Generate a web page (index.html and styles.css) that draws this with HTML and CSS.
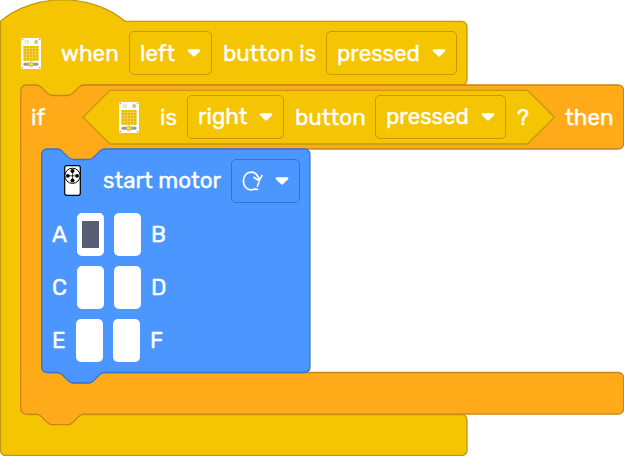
FILE: index.html
```
<!DOCTYPE html>
<html lang="en">
<head>
<meta charset="utf-8">
<title>Blocks</title>
<link rel="stylesheet" href="styles.css">
</head>
<body>
<svg class="defs" width="0" height="0" aria-hidden="true">
  <symbol id="board" viewBox="0 0 20 31">
    <rect width="20" height="31" rx="1.4" fill="#fff"/>
    <g fill="#a5a59e"><circle cx="1.4" cy="1.4" r=".8"/><circle cx="18.6" cy="1.4" r=".8"/><circle cx="1.4" cy="29.5" r=".8"/><circle cx="18.6" cy="29.5" r=".8"/></g>
    <rect x="4" y="2.5" width="3.4" height="3.3" fill="#eee" stroke="#d5d5d5" stroke-width=".6"/>
    <circle cx="15.2" cy="4" r="1.7" fill="#e3c65c" stroke="#bbb" stroke-width=".8"/>
    <rect x="2.4" y="8" width="15.2" height="14.8" fill="#ebba05"/>
    <path d="M5.500 8v15M8.500 8v15M11.500 8v15M14.500 8v15M2.400 10.500h15.200M2.400 13.500h15.200M2.400 16.500h15.200M2.400 19.500h15.200" stroke="#f7dc78" stroke-width=".5"/>
    <rect x="2.500" y="24.800" width="15" height="3" rx="1" fill="#999"/>
    <circle cx="10" cy="26.300" r="2.600" fill="#f4d040" stroke="#c7b982" stroke-width=".6"/>
  </symbol>
  <symbol id="arrow" viewBox="0 0 16 12">
    <path d="M3 2.2H13C14.4 2.2 14.8 3.5 14 4.3L9.2 8.9C8.4 9.6 7.6 9.6 6.8 8.9L2 4.3C1.2 3.5 1.6 2.2 3 2.2Z" fill="#fff"/>
  </symbol>
</svg>
<main class="program">
  <svg class="shapes" width="624" height="456" viewBox="0 0 624 456" aria-hidden="true">
    <path class="event" d="M.5 21.3C33 -7.2 92.500 -7.200 125 21.300H461.700a5.300 5.300 0 0 1 5.300 5.300V79.700a5.300 5.300 0 0 1 -5.300 5.300H90V100H30V414.500H461.700a5.300 5.300 0 0 1 5.300 5.300V450.200a5.300 5.300 0 0 1 -5.300 5.300H5.800a5.300 5.300 0 0 1 -5.300 -5.300Z"/>
    <path class="control" d="M20.800 90.300a5.300 5.300 0 0 1 5.300 -5.300H36.400c2.600 0 4 1.300 5.300 2.600l5.200 5.300c1.300 1.300 2.600 2.600 5.300 2.600h15.700c2.600 0 4 -1.300 5.200 -2.600l5.300 -5.300c1.300 -1.300 2.600 -2.600 5.300 -2.600H618.300a5.300 5.300 0 0 1 5.300 5.300V143.700a5.300 5.300 0 0 1 -5.300 5.300H110V165H50V372.500H618.300a5.300 5.300 0 0 1 5.300 5.300V408.900a5.300 5.300 0 0 1 -5.300 5.300H83.700c-2.600 0 -4 1.300 -5.300 2.600l-5.300 5.300c-1.200 1.300 -2.600 2.600 -5.200 2.600H52.200c-2.700 0 -4 -1.300 -5.300 -2.600l-5.200 -5.300c-1.300 -1.300 -2.700 -2.600 -5.300 -2.600H26.100a5.300 5.300 0 0 1 -5.300 -5.300Z"/>
    <path class="motor" d="M41.700 154.300a5.300 5.300 0 0 1 5.300 -5.300H57.300c2.600 0 4 1.300 5.300 2.600l5.200 5.300c1.300 1.300 2.600 2.600 5.300 2.600h15.700c2.600 0 4 -1.300 5.200 -2.600l5.300 -5.300c1.300 -1.300 2.600 -2.600 5.300 -2.600H304.600a5.300 5.300 0 0 1 5.300 5.300V367.200a5.300 5.300 0 0 1 -5.300 5.300H104.600c-2.600 0 -4 1.300 -5.300 2.600l-5.300 5.300c-1.200 1.300 -2.600 2.600 -5.200 2.600H73.100c-2.700 0 -4 -1.300 -5.300 -2.600l-5.200 -5.300c-1.300 -1.300 -2.700 -2.600 -5.300 -2.600H47a5.300 5.300 0 0 1 -5.300 -5.300Z"/>
    <path class="event" d="M110 90.400H527.500L554.500 117.300L527.500 144H110L83 117.300Z"/>
  </svg>

  <div class="row hat">
    <svg class="board"><use href="#board"/></svg>
    <span class="label when">when</span>
    <span class="field left"><span class="label">left</span><svg class="arrow"><use href="#arrow"/></svg></span>
    <span class="label button-is">button is</span>
    <span class="field pressed"><span class="label">pressed</span><svg class="arrow"><use href="#arrow"/></svg></span>
  </div>

  <div class="row condition">
    <span class="label if">if</span>
    <svg class="board"><use href="#board"/></svg>
    <span class="label is">is</span>
    <span class="field right"><span class="label">right</span><svg class="arrow"><use href="#arrow"/></svg></span>
    <span class="label button">button</span>
    <span class="field pressed"><span class="label">pressed</span><svg class="arrow"><use href="#arrow"/></svg></span>
    <span class="label question">?</span>
    <span class="label then">then</span>
  </div>

  <div class="row start">
    <svg class="motor-icon" viewBox="0 0 17 31">
      <rect x=".7" y=".7" width="15.600" height="29.600" rx="2" fill="#fff" stroke="#000" stroke-width="1.200"/>
      <circle cx="8.500" cy="10.800" r="7.600" fill="#fff" stroke="#000" stroke-width="1"/>
      <path d="M8.500 6v9.600M4 10.800h9" stroke="#000" stroke-width=".7"/>
      <circle cx="8.500" cy="6.100" r="2"/><circle cx="8.500" cy="15.500" r="2"/><circle cx="3.900" cy="10.800" r="1.900"/><circle cx="13.100" cy="10.800" r="1.900"/>
    </svg>
    <span class="label start-motor">start motor</span>
    <span class="field direction">
      <svg class="turn" viewBox="0 0 22 20"><path d="M13.400 17.400C12.200 18.300 10.700 18.800 9.100 18.800C4.500 18.800 1.400 14.900 1.400 10C1.400 5.100 4.500 1.200 9.100 1.200C13.600 1.200 16.800 4.700 16.900 9.500C16.900 12.300 16.300 14 15 15.800M13 18.300H16.200M11.400 6L17 9.800L20.200 4" fill="none" stroke="#fff" stroke-width="1.700"/></svg>
      <svg class="arrow"><use href="#arrow"/></svg>
    </span>
  </div>

  <div class="ports">
    <div class="port-row"><span class="label">A</span><i class="port selected"></i><i class="port"></i><span class="label">B</span></div>
    <div class="port-row"><span class="label">C</span><i class="port"></i><i class="port"></i><span class="label">D</span></div>
    <div class="port-row last"><span class="label">E</span><i class="port"></i><i class="port"></i><span class="label">F</span></div>
  </div>
</main>
</body>
</html>
```
FILE: styles.css
```
body {
  margin: 0;
  background: #fff;
  overflow: hidden;
}
.defs, .shapes { position: absolute; top: 0; left: 0; }
.program {
  position: relative;
  width: 624px;
  height: 456px;
  box-sizing: border-box;
  padding-top: 21px;
  color: #fff;
  font: 400 22.4px/28px Rubik, Roboto, sans-serif;
  -webkit-text-stroke: .4px #fff;
}
.event { fill: #f5c402; stroke: #c29b08; stroke-width: 1.3; }
.control { fill: #ffab19; stroke: #c8851a; stroke-width: 1.3; }
.motor { fill: #4c97ff; stroke: #3373cc; stroke-width: 1.3; }
.row {
  position: relative;
  display: flex;
  align-items: center;
  height: 64px;
  box-sizing: border-box;
}
.label { flex: none; white-space: nowrap; padding-top: 2px; }
.board { flex: none; width: 20px; height: 31px; }
.arrow { flex: none; width: 16px; height: 12px; }
.field {
  flex: none;
  display: flex;
  align-items: center;
  justify-content: space-between;
  box-sizing: border-box;
  height: 44px;
  padding: 0 9px 0 10px;
  border: 1.3px solid #c29b08;
  border-radius: 5px;
}
.hat { padding-left: 21px; }
.when { width: 68px; margin-left: 20px; }
.left { width: 83px; }
.button-is { width: 103px; margin-left: 11px; }
.pressed { width: 131px; }
.condition { padding-left: 31px; }
.condition .field .label { padding-top: 0; }
.if { width: 88px; }
.is { width: 27px; margin-left: 21px; }
.right { width: 97px; }
.button { width: 80px; margin-left: 11px; }
.question { width: 48px; margin-left: 11px; }
.start { height: 63px; padding-left: 64px; }
.motor-icon { flex: none; width: 17px; height: 31px; }
.start-motor { width: 128px; margin-left: 22px; padding-top: 0; }
.direction { width: 69px; border-color: #3373cc; }
.turn { width: 22px; height: 20px; }
.ports {
  position: relative;
  display: flex;
  flex-direction: column;
  gap: 9px;
  padding-left: 52px;
}
.port-row { display: flex; align-items: center; height: 44px; }
.port-row .label:first-child { width: 25px; }
.port {
  box-sizing: border-box;
  width: 27px;
  height: 43px;
  margin-right: 10px;
  border-radius: 5px;
  background: #fff;
}
.selected { border: 7px solid #fff; border-width: 8px 5px; background: #575e75; }
.last .label:first-child { width: 24px; }
```
